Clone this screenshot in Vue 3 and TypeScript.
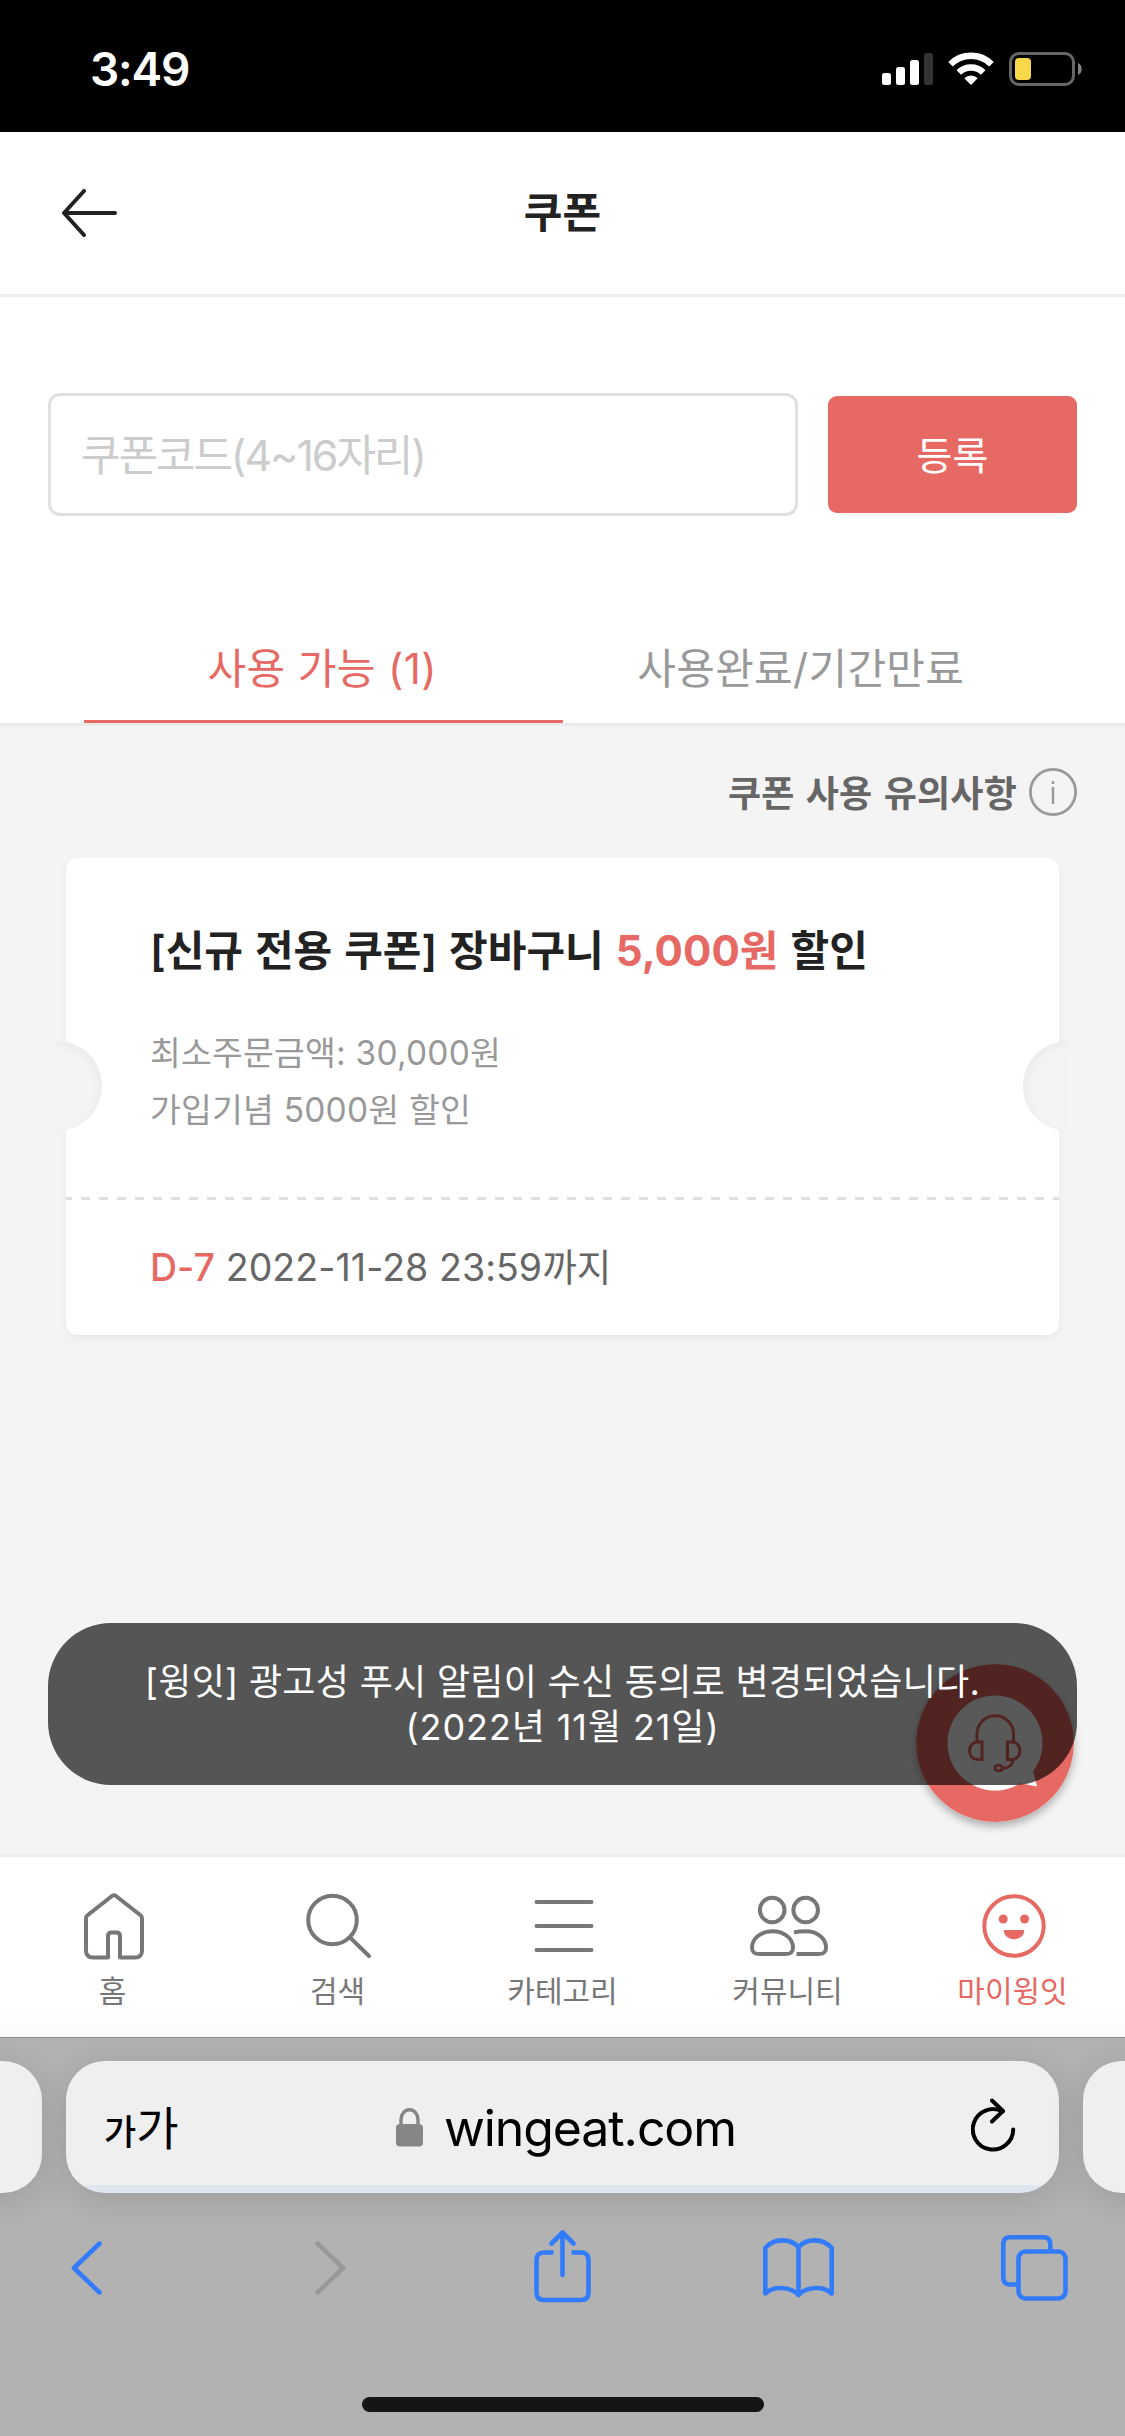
<script setup lang="ts">
interface NavItem {
  id: string
  label: string
  active?: boolean
}

const navItems: NavItem[] = [
  { id: 'home', label: '홈' },
  { id: 'search', label: '검색' },
  { id: 'category', label: '카테고리' },
  { id: 'community', label: '커뮤니티' },
  { id: 'my', label: '마이윙잇', active: true },
]
</script>

<template>
  <div class="phone">
    <div class="status">
      <span class="time">3:49</span>
      <svg class="status-icons" width="201" height="34" viewBox="0 0 201 34">
        <g fill="#fff">
          <rect x="0" y="21" width="9" height="12" rx="2.5" />
          <rect x="14" y="15" width="9" height="18" rx="2.5" />
          <rect x="28" y="8" width="9" height="25" rx="2.5" />
        </g>
        <rect x="42" y="1" width="9" height="32" rx="2.5" fill="#333" />
        <g fill="none" stroke="#fff" stroke-width="6.4">
          <path d="M68.500 12.300A29 29 0 0 1 109.500 12.300" />
          <path d="M76.800 20.600A17.300 17.300 0 0 1 101.200 20.600" />
        </g>
        <path d="M82.300 26.200a9.500 9.500 0 0 1 13.400 0L89 33z" fill="#fff" />
        <rect x="128.500" y="1.500" width="63" height="31" rx="8.500" fill="none" stroke="#666" stroke-width="3" />
        <rect x="133" y="6" width="16" height="22" rx="4" fill="#f8d74a" />
        <path d="M196 11a6 6.500 0 0 1 0 12z" fill="#808080" />
      </svg>
    </div>

    <header class="header">
      <svg class="back" width="55" height="48" viewBox="0 0 55 48">
        <path d="M22 2L2 24l20 22M2 24h51" fill="none" stroke="#222" stroke-width="4" stroke-linecap="round" stroke-linejoin="round" />
      </svg>
      <h1>쿠폰</h1>
    </header>

    <section class="register">
      <div class="code">쿠폰코드(4~16자리)</div>
      <button class="submit">등록</button>
    </section>

    <nav class="tabs">
      <div class="tab on">사용 가능 (1)</div>
      <div class="tab">사용완료/기간만료</div>
    </nav>

    <main class="content">
      <div class="notice">
        <span>쿠폰 사용 유의사항</span>
        <svg width="48" height="48" viewBox="0 0 48 48">
          <circle cx="24" cy="24" r="22.600" fill="none" stroke="#999" stroke-width="2.800" />
          <path d="M24 19v17M24 13v3" stroke="#999" stroke-width="2.400" />
        </svg>
      </div>

      <article class="coupon">
        <i class="notch left"></i>
        <i class="notch right"></i>
        <h2>[신규 전용 쿠폰] 장바구니 <b>5,000원</b> 할인</h2>
        <p>최소주문금액: 30,000원</p>
        <p>가입기념 5000원 할인</p>
        <div class="dash"></div>
        <div class="expiry"><b>D-7</b> 2022-11-28 23:59까지</div>
      </article>

      <svg class="fab" width="158" height="158" viewBox="0 0 158 158">
        <circle cx="79" cy="79" r="79" fill="#e76963" />
        <circle cx="79" cy="79" r="47.500" fill="#fff" />
        <path d="M117 107l4 15.500L103 119z" fill="#fff" />
        <g fill="none" stroke="#e76963" stroke-width="3">
          <path d="M61 77v-7a18 18 0 0 1 36.500 0v7" />
          <path d="M66 78v17.500h-4.500a8 8.750 0 0 1 0-17.500zM91.500 78v17.500h4.500a8 8.750 0 0 0 0-17.500z" />
          <path d="M97 96.500c-1.500 5.500-4 7.500-9.500 7.500" />
          <ellipse cx="82.700" cy="104" rx="3.800" ry="2.800" />
        </g>
      </svg>
      <div class="toast">
        <span>[윙잇] 광고성 푸시 알림이 수신 동의로 변경되었습니다.</span>
        <span class="date">(2022년 11월 21일)</span>
      </div>
    </main>

    <nav class="bottom">
      <div v-for="item in navItems" :key="item.id" class="item" :class="{ active: item.active }">
        <svg width="80" height="68" viewBox="0 0 80 68" fill="none" stroke="currentColor" stroke-width="4">
          <path v-if="item.id === 'home'" transform="translate(10 0)" stroke-linejoin="round" d="M24 64.500H9Q2 64.500 2 57.500V25.500Q2 23.500 3.500 22.300L28 3Q30 1.500 32 3L56.500 22.300Q58 23.500 58 25.500V57.500Q58 64.500 51 64.500H36V43Q36 39.500 32.500 39.500H27.500Q24 39.500 24 43Z" />
          <g v-else-if="item.id === 'search'" stroke-linecap="round">
            <circle cx="33.500" cy="27" r="24.300" />
            <path d="M51 44.500l19 18.500" />
          </g>
          <path v-else-if="item.id === 'category'" stroke-linecap="round" d="M12.500 9h55M12.500 33h55M12.500 57h55" />
          <g v-else-if="item.id === 'community'">
            <circle cx="23.200" cy="17" r="12.300" />
            <circle cx="56.700" cy="17" r="12.300" />
            <path d="M23.500 38.200C12 38.200 3 45.500 3 54.500C3 60 6 61 11 61H36C41 61 44 60 44 54.500C44 45.500 35 38.200 23.500 38.200Z" />
            <path d="M45 39.500C48.500 38.500 52 38.200 56.700 38.200C68.500 38.200 77 45.500 77 54.500C77 60 74 61 69 61H47.500" />
          </g>
          <g v-else>
            <circle cx="40" cy="33" r="29.700" />
            <g fill="currentColor" stroke="none">
              <circle cx="29.200" cy="26" r="4.500" />
              <circle cx="50.600" cy="26" r="4.500" />
              <path d="M31 37h18q1.500 0 1.300 1.500a10.400 9 0 0 1-20.600 0Q29.500 37 31 37z" />
            </g>
          </g>
        </svg>
        <span>{{ item.label }}</span>
      </div>
    </nav>

    <footer class="browser">
      <div class="addresses">
        <div class="side"></div>
        <div class="address">
          <span class="aa"><small>가</small>가</span>
          <svg class="lock" width="27" height="39" viewBox="0 0 27 39">
            <path d="M5 18V11.500a8.500 9.800 0 0 1 17 0V18" fill="none" stroke="#868689" stroke-width="3.400" />
            <rect x="0" y="16" width="27" height="22.500" rx="4" fill="#868689" />
          </svg>
          <span class="url">wingeat.com</span>
          <svg class="reload" width="45" height="54" viewBox="0 0 45 54" fill="none" stroke="#000" stroke-width="4" stroke-linecap="round" stroke-linejoin="round">
            <path d="M42.200 31.500A20.200 20.200 0 1 1 31.500 13.500" />
            <path d="M21 2.500L32 13 21 23.500" />
          </svg>
        </div>
        <div class="side"></div>
      </div>
      <div class="tools">
        <svg width="31" height="54" viewBox="0 0 31 54"><path d="M28.500 2.500L3 27l25.500 24.500" /></svg>
        <svg class="forward" width="31" height="54" viewBox="0 0 31 54"><path d="M2.500 2.500L28 27 2.500 51.500" /></svg>
        <svg class="share" width="57" height="73" viewBox="0 0 57 73">
          <path d="M28.500 45V3M17.500 13.500L28.500 2.500 39.500 13.500" />
          <path stroke-linecap="butt" d="M19.500 22.500H10Q2.500 22.500 2.500 30V62.500Q2.500 70 10 70H47Q54.500 70 54.500 62.500V30Q54.500 22.500 47 22.500H37.500" />
        </svg>
        <svg class="book" width="71" height="60" viewBox="0 0 71 60">
          <path d="M35.500 9C27 0 11 0 2.300 10V55.500C10 48 27 48 35.500 57C44 48 61 48 68.700 55.500V10C60 0 44 0 35.500 9ZM35.500 9V57" />
        </svg>
        <svg class="windows" width="67" height="66" viewBox="0 0 67 66">
          <path stroke-linecap="butt" d="M16 49.500H9Q2.300 49.500 2.300 42.500V9Q2.300 2.300 9 2.300H42.500Q49.300 2.300 49.300 9V15" />
          <rect x="17.500" y="16.500" width="47" height="47" rx="7" />
        </svg>
      </div>
      <div class="indicator"></div>
    </footer>
  </div>
</template>

<style>
body {
  margin: 0;
}
</style>

<style scoped>
.phone {
  width: 1125px;
  height: 2436px;
  display: flex;
  flex-direction: column;
  overflow: hidden;
  background: #fff;
  color: #222;
  font-family: Inter, "Noto Sans CJK KR", sans-serif;
  white-space: nowrap;
}
h1, h2, p {
  margin: 0;
}
.status {
  height: 132px;
  flex: none;
  background: #000;
  color: #fff;
  display: flex;
  justify-content: space-between;
  padding: 0 42px 0 90px;
  box-sizing: border-box;
}
.time {
  font-size: 46px;
  font-weight: 600;
  letter-spacing: -1.2px;
  line-height: 60px;
  margin-top: 39px;
}
.status-icons {
  margin-top: 52px;
}
.header {
  height: 162px;
  flex: none;
  border-bottom: 3px solid #eee;
  display: flex;
  align-items: center;
  padding-left: 62px;
}
.header h1 {
  flex: 1;
  text-align: center;
  margin-right: 117px;
  font-size: 42px;
  line-height: 60px;
  font-weight: 700;
}
.register {
  display: flex;
  align-items: center;
  gap: 30px;
  padding: 96px 48px 0;
  height: 123px;
}
.code {
  width: 750px;
  height: 123px;
  box-sizing: border-box;
  border: 3px solid #e0e0e0;
  border-radius: 12px;
  padding-left: 30px;
  line-height: 119px;
  font-size: 43px;
  letter-spacing: -2.1px;
  color: #ccc;
}
.submit {
  width: 249px;
  height: 117px;
  border: 0;
  padding: 0;
  border-radius: 9px;
  background: #e76963;
  color: #fff;
  font: 39px/119px Inter, "Noto Sans CJK KR", sans-serif;
}
.tabs {
  display: flex;
  padding: 96px 84px 0;
  border-bottom: 3px solid #ebebeb;
}
.tab {
  width: 479px;
  box-sizing: border-box;
  height: 111px;
  padding-right: 2px;
  text-align: center;
  font-size: 42px;
  line-height: 113px;
  letter-spacing: 0.3px;
  color: #999;
}
.tab.on {
  color: #e76963;
  letter-spacing: 0.4px;
  border-bottom: 3px solid #e76963;
}
.content {
  position: relative;
  flex: 1;
  background: #f4f4f4;
}
.notice {
  display: flex;
  justify-content: flex-end;
  align-items: center;
  gap: 12px;
  padding: 42px 48px 0;
  height: 48px;
  font-size: 36px;
  line-height: 46px;
  font-weight: 600;
  letter-spacing: 0.2px;
  word-spacing: 2px;
  color: #666;
}
.notice span {
  margin-top: 3px;
}
.coupon {
  position: relative;
  margin: 42px 66px 0;
  height: 477px;
  background: #fff;
  border-radius: 12px;
  box-shadow: 0 3px 9px rgba(0, 0, 0, 0.05);
}
.coupon h2 {
  font-size: 42px;
  font-weight: 600;
  line-height: 60px;
  word-spacing: 1.4px;
  padding: 63px 84px 44px;
}
.coupon h2 b {
  font-weight: 700;
  letter-spacing: 0.1px;
}
.coupon h2 b, .expiry b {
  color: #e76963;
}
.coupon p {
  padding-left: 84px;
  font-size: 33.5px;
  letter-spacing: 0.2px;
  line-height: 57px;
  color: #999;
}
.dash {
  margin-top: 58px;
  height: 3px;
  background: repeating-linear-gradient(90deg, #e0e0e0 0 9px, transparent 9px 18px) -3px 0 / 1008px 3px;
}
.expiry {
  padding-left: 84px;
  font-size: 37.5px;
  letter-spacing: 0.06px;
  line-height: 136px;
  color: #666;
}
.expiry b {
  font-weight: 500;
}
.notch {
  position: absolute;
  top: 183px;
  width: 45px;
  height: 90px;
  background: #f4f4f4;
}
.notch.left {
  left: -9px;
  border-radius: 0 45px 45px 0;
  box-shadow: inset -3px 3px 9px rgba(0, 0, 0, 0.04);
}
.notch.right {
  right: -9px;
  border-radius: 45px 0 0 45px;
  box-shadow: inset 3px 3px 9px rgba(0, 0, 0, 0.04);
}
.fab {
  position: absolute;
  right: 51px;
  bottom: 32px;
  border-radius: 50%;
  box-shadow: 0 4px 9px rgba(0, 0, 0, 0.3);
}
.toast {
  position: absolute;
  left: 48px;
  right: 48px;
  bottom: 69px;
  height: 162px;
  box-sizing: border-box;
  padding-top: 37px;
  border-radius: 63px;
  background: rgba(0, 0, 0, 0.65);
  color: #fff;
  display: flex;
  flex-direction: column;
  align-items: center;
  font-size: 36px;
  line-height: 45px;
  letter-spacing: 0.3px;
}
.toast .date {
  letter-spacing: 0.9px;
}
.bottom {
  height: 180px;
  flex: none;
  border-top: 3px solid #eee;
  display: flex;
  background: linear-gradient(#fff 85%, #fafafa);
}
.item {
  width: 225px;
  display: flex;
  flex-direction: column;
  align-items: center;
  padding-top: 36px;
  color: #777;
  font-size: 30px;
  line-height: 40px;
}
.item svg {
  margin: 0 0 10px 3px;
}
.item.active {
  color: #e76963;
}
.browser {
  height: 399px;
  flex: none;
  box-sizing: border-box;
  border-top: 1px solid #8b8b8b;
  background: #b2b2b2;
}
.addresses {
  display: flex;
  justify-content: center;
  gap: 24px;
  padding-top: 23px;
}
.side, .address {
  flex: none;
  height: 132px;
  border-radius: 39px;
  background: #efefef;
  box-shadow: 0 6px 36px rgba(0, 0, 0, 0.12);
}
.side {
  width: 300px;
}
.address {
  width: 993px;
  box-sizing: border-box;
  background: linear-gradient(#efefef 124px, #dfe6ef 124px);
  display: flex;
  align-items: flex-start;
  padding-left: 38px;
  color: #000;
}
.aa {
  width: 292px;
  font-size: 46px;
  line-height: 134px;
}
.aa small {
  font-size: 35px;
  font-weight: 500;
}
.lock {
  margin: 47px 21px 0 0;
}
.url {
  width: 527px;
  font-size: 50px;
  letter-spacing: -1.1px;
  line-height: 134px;
}
.reload {
  margin-top: 37px;
}
.tools {
  display: flex;
  align-items: center;
  padding: 33px 0 0 71px;
  height: 84px;
}
.tools svg {
  flex: none;
  fill: none;
  stroke: #327cfb;
  stroke-width: 4.600;
  stroke-linecap: round;
  stroke-linejoin: round;
}
.tools .forward {
  margin-left: 213px;
  stroke: #999;
}
.tools .share {
  margin: -4px 0 0 188px;
}
.tools .book {
  margin-left: 172px;
}
.tools .windows {
  margin-left: 167px;
}
.indicator {
  width: 402px;
  height: 15px;
  margin: 87px auto 0;
  border-radius: 8px;
  background: #151515;
}
</style>
